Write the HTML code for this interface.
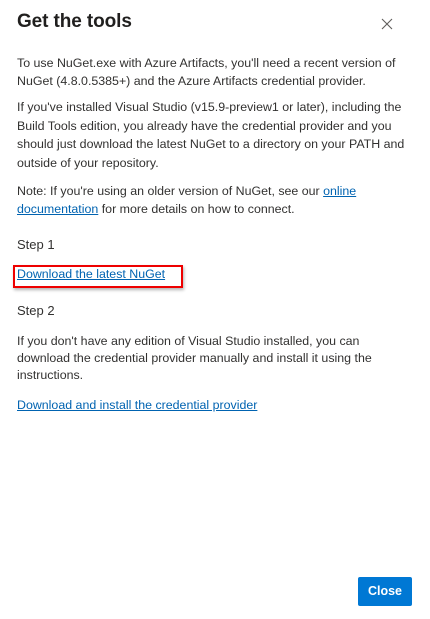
<!DOCTYPE html>
<html><head><style>
html,body{margin:0;padding:0;background:#fff;width:430px;height:619px;overflow:hidden}
body{font-family:"Liberation Sans",sans-serif;color:#323130;font-size:12.4px;position:relative}
.t{position:absolute;left:17px;white-space:nowrap}
h1{position:absolute;left:17px;top:11px;margin:0;font-size:19px;font-weight:600;color:#201f1e;letter-spacing:-0.1px}
a{color:#0063b1;text-decoration:underline}
.x{position:absolute;left:381px;top:18px;width:12px;height:12px}
.btn{position:absolute;left:358px;top:577px;width:54px;height:29px;background:#0078d4;border-radius:2px;color:#fff;font-weight:bold;font-size:12.5px;line-height:29px;text-align:center}
.box{position:absolute;left:13px;top:265px;width:166px;height:19px;border:2px solid #e00;box-shadow:1px 2px 3px rgba(0,0,0,.3)}
</style></head><body>
<h1>Get the tools</h1>
<svg class="x" viewBox="0 0 12 12"><path d="M1 1L11 11M11 1L1 11" stroke="#605e5c" stroke-width="1.1"/></svg>
<div class="t" style="top:56px">To use NuGet.exe with Azure Artifacts, you'll need a recent version of</div>
<div class="t" style="top:74px">NuGet (4.8.0.5385+) and the Azure Artifacts credential provider.</div>
<div class="t" style="top:100px">If you've installed Visual Studio (v15.9-preview1 or later), including the</div>
<div class="t" style="top:119px">Build Tools edition, you already have the credential provider and you</div>
<div class="t" style="top:137px">should just download the latest NuGet to a directory on your PATH and</div>
<div class="t" style="top:156px">outside of your repository.</div>
<div class="t" style="top:184px">Note: If you're using an older version of NuGet, see our <a>online</a></div>
<div class="t" style="top:202px"><a>documentation</a> for more details on how to connect.</div>
<div class="t" style="top:237px;font-size:13px">Step 1</div>
<div class="box"></div>
<div class="t" style="top:267px"><a>Download the latest NuGet</a></div>
<div class="t" style="top:303px;font-size:13px">Step 2</div>
<div class="t" style="top:334px">If you don't have any edition of Visual Studio installed, you can</div>
<div class="t" style="top:351px">download the credential provider manually and install it using the</div>
<div class="t" style="top:368px">instructions.</div>
<div class="t" style="top:398px"><a>Download and install the credential provider</a></div>
<div class="btn">Close</div>
</body></html>
